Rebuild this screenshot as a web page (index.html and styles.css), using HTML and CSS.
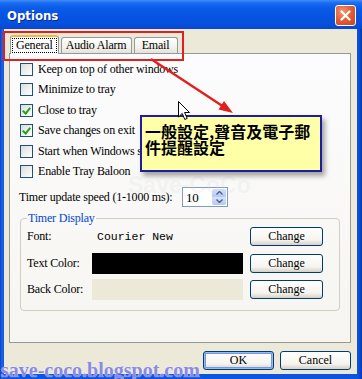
FILE: index.html
```html
<!DOCTYPE html>
<html lang="zh-Hant">
<head>
    <meta charset="UTF-8">
    <title>Options</title>
    <link rel="stylesheet" href="styles.css">
</head>
<body>
    <div class="window">
        <div class="titlebar">
            <span class="title">Options</span>
            <button class="close" aria-label="Close">
                <svg width="11" height="11" viewBox="0 0 11 11"><path d="M1.5 1.5 L9.5 9.5 M9.5 1.5 L1.5 9.5" stroke="#fff" stroke-width="2.2" stroke-linecap="round"/></svg>
            </button>
        </div>

        <div class="client">
            <div class="tabs">
                <div class="tab active"><span class="focus">General</span></div>
                <div class="tab tab-audio">Audio Alarm</div>
                <div class="tab tab-email">Email</div>
            </div>

            <div class="panel">
                <label class="check"><span class="box"></span>Keep on top of other windows</label>
                <label class="check"><span class="box"></span>Minimize to tray</label>
                <label class="check"><span class="box on"></span>Close to tray</label>
                <label class="check"><span class="box on"></span>Save changes on exit</label>
                <label class="check"><span class="box"></span>Start when Windows starts</label>
                <label class="check"><span class="box"></span>Enable Tray Baloon</label>

                <div class="speed-row">
                    <span class="speed-label">Timer update speed (1-1000 ms):</span>
                    <div class="spin">
                        <span class="spin-value">10</span>
                        <div class="spin-buttons">
                            <span class="spin-btn"><svg width="7" height="4" viewBox="0 0 7 4"><path d="M0.5 3.5 L3.5 0.5 L6.5 3.5" fill="none" stroke="#4d6185" stroke-width="1.4"/></svg></span>
                            <span class="spin-btn"><svg width="7" height="4" viewBox="0 0 7 4"><path d="M0.5 0.5 L3.5 3.5 L6.5 0.5" fill="none" stroke="#4d6185" stroke-width="1.4"/></svg></span>
                        </div>
                    </div>
                </div>

                <fieldset class="group">
                    <legend>Timer Display</legend>
                    <div class="group-grid">
                        <span class="g-label">Font:</span>
                        <span class="g-font">Courier New</span>
                        <button class="btn">Change</button>

                        <span class="g-label">Text Color:</span>
                        <span class="swatch swatch-text"></span>
                        <button class="btn">Change</button>

                        <span class="g-label">Back Color:</span>
                        <span class="swatch swatch-back"></span>
                        <button class="btn">Change</button>
                    </div>
                </fieldset>
            </div>

            <div class="actions">
                <button class="btn btn-default">OK</button>
                <button class="btn">Cancel</button>
            </div>
        </div>

        <!-- annotations drawn over the dialog -->
        <div class="highlight"></div>
        <svg class="pointer" width="362" height="379" viewBox="0 0 362 379">
            <line x1="151" y1="59" x2="224" y2="107" stroke="#e0201c" stroke-width="2.4"/>
            <polygon points="233,113 218.5,109.5 224,101.1" fill="#e0201c"/>
        </svg>
        <span class="stamp">Save-CoCo</span>
        <div class="callout">一般設定,聲音及電子郵<br>件提醒設定</div>
        <svg class="cursor" width="13" height="20" viewBox="0 0 13 20">
            <path d="M0.5 0.5 L0.5 16 L4.2 12.4 L6.8 18.5 L9.2 17.4 L6.6 11.5 L11.5 11.5 Z" fill="#fff" stroke="#000" stroke-width="1"/>
        </svg>
        <span class="blog">save-coco.blogspot.com</span>
    </div>
</body>
</html>
```

FILE: styles.css
```css
html,
body {
    margin: 0;
    padding: 0;
}

body {
    width: 362px;
    height: 379px;
    overflow: hidden;
    background: #0a4fd8;
}

button {
    margin: 0;
    padding: 0;
    border: 0;
    background: none;
    font: inherit;
    color: inherit;
    -webkit-appearance: none;
    appearance: none;
}

/* window frame */
.window {
    position: relative;
    width: 362px;
    height: 379px;
    display: flex;
    flex-direction: column;
    background: linear-gradient(90deg, #0b3fc4 0, #1f63e6 2px, #0d55e0 4px, #0d55e0 calc(100% - 5px), #0a47d2 calc(100% - 2px), #08349e 100%);
    font: 12px 'Liberation Serif', 'Times New Roman', serif;
    letter-spacing: -0.2px;
    color: #000;
}

.titlebar {
    height: 29px;
    flex: none;
    display: flex;
    align-items: center;
    justify-content: space-between;
    padding: 0 6px 0 7px;
    background: linear-gradient(180deg, #3e8ef8 0, #1a6cf0 3px, #0a5be8 8px, #0754e2 16px, #0650dc 24px, #0847d2 29px);
}

.title {
    font: bold 13px 'DejaVu Sans Condensed', 'Liberation Sans', sans-serif;
    letter-spacing: 0;
    color: #fff;
    text-shadow: 1px 1px 0 #0a2a8a;
    margin-top: 1px;
}

.close {
    width: 21px;
    height: 21px;
    margin-top: 1px;
    box-sizing: border-box;
    border: 1px solid #fff;
    border-radius: 3px;
    background: radial-gradient(circle at 35% 30%, #f29a78 0, #e2603a 45%, #c8401c 100%);
    display: flex;
    align-items: center;
    justify-content: center;
}

.client {
    flex: 1;
    margin: 0 5px 5px 4px;
    padding: 6px 6px 0 5px;
    background: #ece9d8;
    display: flex;
    flex-direction: column;
}

/* tabs */
.tabs {
    height: 18px;
    display: flex;
    align-items: flex-end;
    gap: 2px;
    padding-left: 1px;
}

.tab {
    box-sizing: border-box;
    height: 16px;
    padding: 0 4px;
    border: 1px solid #919b9c;
    border-bottom: 0;
    border-radius: 3px 3px 0 0;
    background: linear-gradient(#ffffff, #f3f2ec 60%, #e4e2d8);
    line-height: 15px;
    text-align: center;
    white-space: nowrap;
}

.tab-audio {
    width: 71px;
}

.tab-email {
    width: 44px;
}

.tab.active {
    position: relative;
    z-index: 1;
    height: 19px;
    margin-bottom: -1px;
    padding: 2px 2px 0;
    border-top: 2px solid #f5b83e;
    background: #fcfcfe;
}

.focus {
    display: block;
    padding: 0 3px;
    outline: 1px dotted #000;
    line-height: 13px;
}

.panel {
    height: 290px;
    box-sizing: border-box;
    border: 1px solid #919b9c;
    padding: 5px 10px 0;
    background: linear-gradient(#fcfcfe, #f6f5f0);
}

.check {
    height: 20.5px;
    display: flex;
    align-items: center;
    gap: 5px;
    white-space: nowrap;
}

.box {
    width: 13px;
    height: 13px;
    box-sizing: border-box;
    border: 1px solid #1c5180;
    background: linear-gradient(135deg, #dcdcd7, #ffffff);
    flex: none;
    position: relative;
}

.box.on::after {
    content: "";
    position: absolute;
    left: 3px;
    top: 1px;
    width: 3px;
    height: 6px;
    border: solid #21a121;
    border-width: 0 2px 2px 0;
    transform: rotate(40deg);
}

/* timer speed */
.speed-row {
    margin-top: 4px;
    height: 22px;
    display: flex;
    align-items: center;
}

.speed-label {
    width: 163px;
    margin-left: -1px;
    white-space: nowrap;
}

.spin {
    width: 46px;
    height: 20px;
    box-sizing: border-box;
    border: 1px solid #7f9db9;
    background: #fff;
    display: flex;
    justify-content: space-between;
    padding: 1px;
}

.spin-value {
    font-size: 13px;
    line-height: 17px;
    padding-left: 2px;
}

.spin-buttons {
    width: 14px;
    display: flex;
    flex-direction: column;
    border-radius: 2px;
    overflow: hidden;
}

.spin-btn {
    flex: 1;
    display: flex;
    align-items: center;
    justify-content: center;
    background: linear-gradient(#d6e2fd, #b4c8f6);
}

/* timer display group */
.group {
    margin: 3px 0 0;
    padding: 1px 6px 10px;
    border: 1px solid #d0d0bf;
    border-radius: 4px;
}

.group legend {
    padding: 0 1px;
    color: #0046d5;
    line-height: 14px;
}

.group-grid {
    display: grid;
    grid-template-columns: 58px 151px 73px;
    grid-auto-rows: 21px;
    column-gap: 7px;
    row-gap: 5.5px;
    align-items: center;
}

.g-font {
    padding-left: 5px;
    font: 11.5px 'Liberation Mono', 'Courier New', monospace;
    letter-spacing: 0;
}

.swatch {
    height: 21px;
}

.swatch-text {
    background: #000;
}

.swatch-back {
    background: #ece9d8;
}

.btn {
    height: 19px;
    box-sizing: border-box;
    border: 1px solid #003c74;
    border-radius: 3px;
    background: linear-gradient(#ffffff, #f5f4ef 70%, #d6d0c5);
    text-align: center;
    line-height: 17px;
}

.actions {
    margin-top: 8px;
    display: flex;
    justify-content: flex-end;
    gap: 6px;
}

.actions .btn {
    width: 71px;
}

.btn-default {
    box-shadow: inset 0 0 0 1px #9cb8ef, inset 0 0 0 2px #6f98e8;
}

/* annotations */
.highlight {
    position: absolute;
    left: 3px;
    top: 31px;
    width: 177px;
    height: 26px;
    border: 2px solid #e0201c;
}

.pointer {
    position: absolute;
    left: 0;
    top: 0;
    pointer-events: none;
}

.stamp {
    position: absolute;
    left: 128px;
    top: 172px;
    font: bold 23px 'Liberation Sans', sans-serif;
    color: rgba(210, 210, 210, 0.18);
    letter-spacing: 0;
}

.callout {
    position: absolute;
    left: 140px;
    top: 115px;
    width: 182px;
    height: 57px;
    box-sizing: border-box;
    border: 2px solid #1e1e9c;
    padding: 6px 0 0 3px;
    background: #ffffa8;
    box-shadow: 3px 4px 5px rgba(0, 0, 0, 0.35);
    font: bold 16px 'Noto Sans CJK TC', sans-serif;
    line-height: 16px;
    letter-spacing: 0;
    white-space: nowrap;
}

.cursor {
    position: absolute;
    left: 178px;
    top: 101px;
}

.blog {
    position: absolute;
    left: 1px;
    bottom: -3px;
    font: bold 20px 'Liberation Serif', 'Times New Roman', serif;
    line-height: 23px;
    letter-spacing: 0;
    color: #8a8ae4;
    text-shadow: 0 0 1px #fff;
}
```
